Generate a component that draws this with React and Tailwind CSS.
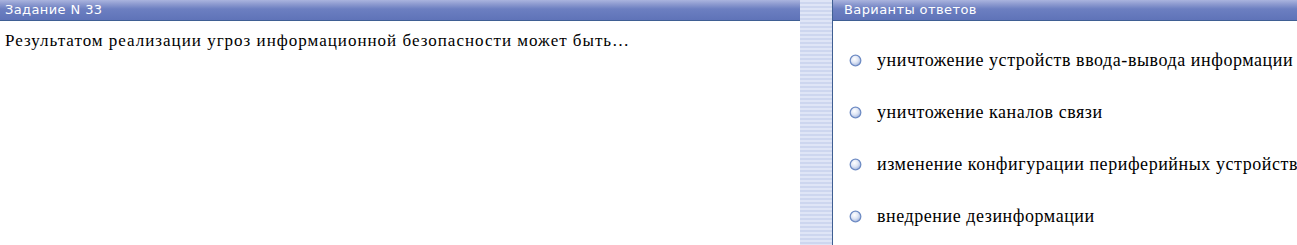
import React from "react";

const Radio = () => (
  <svg width="13" height="13" viewBox="0 0 13 13" className="shrink-0">
    <defs>
      <radialGradient id="rg" cx="0.4" cy="0.35" r="0.7">
        <stop offset="0" stopColor="#ffffff" />
        <stop offset="0.5" stopColor="#dfe6f5" />
        <stop offset="1" stopColor="#9fb2da" />
      </radialGradient>
    </defs>
    <circle cx="6.5" cy="6.5" r="5.3" fill="url(#rg)" stroke="#6f8cc4" strokeWidth="1.3" />
  </svg>
);

const Header = ({ children, className = "" }) => (
  <div
    className={
      "h-[21px] flex items-center pl-[5px] text-white text-[13px] tracking-[0.4px] border-b border-[#3f5f93] bg-[linear-gradient(#aab4de_0%,#8e9bd0_20%,#6c7fc1_45%,#5f73b8_100%)] font-['DejaVu_Sans',Tahoma,sans-serif] " +
      className
    }
  >
    {children}
  </div>
);

const options = [
  "уничтожение устройств ввода-вывода информации",
  "уничтожение каналов связи",
  "изменение конфигурации периферийных устройств",
  "внедрение дезинформации",
];

export default function App() {
  return (
    <div className="w-[1297px] h-[245px] flex bg-white overflow-hidden">
      <div className="w-[800px] shrink-0 flex flex-col">
        <Header>Задание N 33</Header>
        <div className="pl-[5px] pt-[11px] text-[17px] leading-[18px] tracking-[1px] text-black font-['Times_New_Roman','Liberation_Serif',Tinos,Times,serif]">
          Результатом реализации угроз информационной безопасности может быть…
        </div>
      </div>
      <div className="w-[33px] shrink-0 border-r border-[#3f5f93] bg-[repeating-linear-gradient(#dfe5f6_0px,#dfe5f6_2px,#cdd6ef_2px,#cdd6ef_4px)]" />
      <div className="flex-1 flex flex-col min-w-0">
        <Header className="pl-[11px]">Варианты ответов</Header>
        <div className="flex flex-col pt-[30px] pl-[16px] gap-[34px] whitespace-nowrap text-[18px] leading-[18px] tracking-[0.55px] text-black font-['Times_New_Roman','Liberation_Serif',Tinos,Times,serif]">
          {options.map((o) => (
            <div key={o} className="flex items-center gap-[15px]">
              <Radio />
              <span>{o}</span>
            </div>
          ))}
        </div>
      </div>
    </div>
  );
}
